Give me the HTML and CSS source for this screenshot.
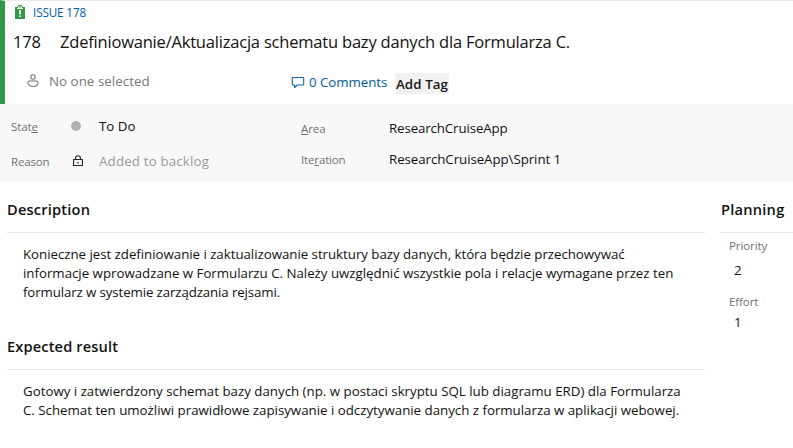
FILE: index.html
```html
<!DOCTYPE html>
<html lang="pl">
<head>
<meta charset="utf-8">
<title>Issue 178</title>
<link rel="stylesheet" href="styles.css">
</head>
<body>
<header class="header">
  <div class="kind">
    <svg class="kind-icon" width="12" height="15" viewBox="0 0 12 15"><path d="M1 2h2.500V1L5 0h2l1.500 1v1H11v12H1z" fill="#339947"/><path d="M3 3.500h6M4.500 3V2h3v1" fill="none" stroke="#fff"/><path d="M6 5v4.500M6 10.500v1.500" stroke="#fff" stroke-width="1.600"/></svg>
    <a class="kind-link">ISSUE 178</a>
  </div>
  <div class="title-row"><span class="number">178</span><h1 class="title">Zdefiniowanie/Aktualizacja schematu bazy danych dla Formularza C.</h1></div>
  <div class="meta">
    <svg class="person" width="12" height="14" viewBox="0 0 12 14" fill="none" stroke="#777" stroke-width="1.100"><circle cx="6" cy="3" r="2.200"/><path d="M2.200 7h7.600q1.200 0 1.200 1.200c0 2.700-2 4.300-5 4.300s-5-1.600-5-4.300q0-1.200 1.200-1.200z"/></svg>
    <span class="assignee">No one selected</span>
    <a class="comments"><svg width="14" height="13" viewBox="0 0 14 13" fill="none" stroke="#1664a5" stroke-width="1.100" stroke-linejoin="round"><path d="M2 1.500h10q.7 0 .7.700v6.100q0 .7-.7.700H6.300L3.600 11.600V9H2q-.7 0-.7-.7V2.200q0-.7.7-.7z"/></svg><span class="comments-text">0 Comments</span></a>
    <button class="tag">Add Tag</button>
  </div>
</header>
<section class="fields">
  <div class="left-fields">
    <div class="field"><span class="label state">Stat<u>e</u></span><i class="dot"></i><span class="value todo">To Do</span></div>
    <div class="field"><span class="label reason">Reason</span><svg class="lock" width="12" height="13" viewBox="0 0 12 13" fill="none" stroke="#222" stroke-width="1.100"><path d="M1.600 4.500h8.800v6H1.600zM3.600 4.500V2.800a2.400 2.100 0 0 1 4.800 0v1.700"/><path d="M5.300 7h1.400v1.400H5.300z" fill="#222" stroke="none"/></svg><span class="value backlog">Added to backlog</span></div>
  </div>
  <div class="right-fields">
    <div class="field"><span class="label area"><u>A</u>rea</span><span class="value path">ResearchCruiseApp</span></div>
    <div class="field"><span class="label iteration">Ite<u>r</u>ation</span><span class="value sprint">ResearchCruiseApp\Sprint 1</span></div>
  </div>
</section>
<main class="content">
  <div class="details">
    <section class="block">
      <h2 class="h-description">Description</h2>
      <p class="copy"><span class="d1">Konieczne jest zdefiniowanie i zaktualizowanie struktury bazy danych, która będzie przechowywać</span><br><span class="d2">informacje wprowadzane w Formularzu C. Należy uwzględnić wszystkie pola i relacje wymagane przez ten</span><br><span class="d3">formularz w systemie zarządzania rejsami.</span></p>
    </section>
    <section class="block">
      <h2 class="h-result">Expected result</h2>
      <p class="copy"><span class="e1">Gotowy i zatwierdzony schemat bazy danych (np. w postaci skryptu SQL lub diagramu ERD) dla Formularza</span><br><span class="e2">C. Schemat ten umożliwi prawidłowe zapisywanie i odczytywanie danych z formularza w aplikacji webowej.</span></p>
    </section>
  </div>
  <aside class="planning">
    <h2 class="h-planning">Planning</h2>
    <dl><dt class="label priority">Priority</dt><dd class="first">2</dd><dt class="label effort">Effort</dt><dd class="second">1</dd></dl>
  </aside>
</main>
</body>
</html>
```
FILE: styles.css
```css
* { box-sizing: border-box; }
body { margin: 0; width: 793px; height: 448px; overflow: hidden; background: #fff; color: #111; font: 13.3px/19px "Open Sans", "Noto Sans", sans-serif; white-space: nowrap; }
h1, h2, p, dl, dd { margin: 0; }
svg { display: block; flex: none; }
u { text-decoration-thickness: 1px; text-underline-offset: 1px; }

.header { height: 104px; border-left: 5px solid #339947; border-top: 1px solid #e8e8e8; }
.kind { display: flex; height: 23px; padding: 4px 0 0 9px; }
.kind-link { margin: -2px 0 0 7px; color: #005a9e; font-size: 11.7px; letter-spacing: -.13px; }
.title-row { display: flex; align-items: center; height: 35px; padding-left: 8px; }
.number { width: 47px; font-size: 16.500px; letter-spacing: -.2px; }
.title { font-size: 16.500px; font-weight: 400; line-height: 24px; letter-spacing: -.2px; }
.meta { display: flex; align-items: flex-start; padding: 13px 0 0 22px; }
.person { margin-top: 2px; }
.assignee { width: 232px; margin-left: 10px; color: #777; letter-spacing: .05px; }
.comments { display: flex; width: 104px; margin-left: 10px; color: #005a9e; letter-spacing: -.05px; }
.comments svg { margin: 4px 4px 0 0; }
.comments-text { margin-top: 1px; }
.tag { height: 21px; width: 54px; margin-top: 1px; padding: 2px 0 0; border: 0; border-radius: 2px; background: #f0f0f0; color: #161616; font: 600 13.3px/19px "Open Sans", sans-serif; letter-spacing: .12px; }

.fields { display: flex; height: 78px; background: #f8f8f8; }
.left-fields { width: 301px; padding: 13px 0 0 11px; }
.left-fields .field { height: 35px; }
.right-fields { padding-top: 15px; }
.right-fields .field { height: 31px; }
.field { display: flex; align-items: flex-start; }
.label { color: #707070; font-size: 11.5px; }
.left-fields .label { width: 60px; }
.right-fields .label { width: 88px; }
.state, .priority { letter-spacing: -.1px; }
.reason { letter-spacing: -.15px; }
.area { letter-spacing: -.1px; }
.iteration { letter-spacing: -.15px; }
.effort { letter-spacing: -.1px; }
.dot { width: 10px; height: 10px; margin: 4px 18px 0 0; border-radius: 50%; background: #b2b2b2; }
.lock { margin: 3px 15px 0 1px; }
.backlog { color: #999; letter-spacing: .17px; }
.path { letter-spacing: -.12px; }
.sprint { letter-spacing: -.06px; }

.content { display: flex; gap: 16px; padding-left: 7px; }
.details { width: 698px; }
.block { height: 137px; }
h2 { height: 51px; padding-top: 17px; border-bottom: 1px solid #e8e8e8; font-size: 14.6px; font-weight: 600; line-height: 20px; color: #111; }
.h-description { letter-spacing: .2px; }
.h-result { letter-spacing: .15px; }
.h-planning { letter-spacing: .25px; }
.copy { padding: 12px 0 0 16px; }
.d1 { letter-spacing: -.035px; }
.d2 { letter-spacing: -.015px; }
.d3 { letter-spacing: -.12px; }
.e2 { letter-spacing: -.01px; }
.planning { flex: 1; }
.planning dl { padding: 3px 0 0 8px; }
.planning dd { padding-left: 5px; }
.planning .first { padding-top: 6px; margin-bottom: 12px; }
.planning .second { padding-top: 2px; }
```
